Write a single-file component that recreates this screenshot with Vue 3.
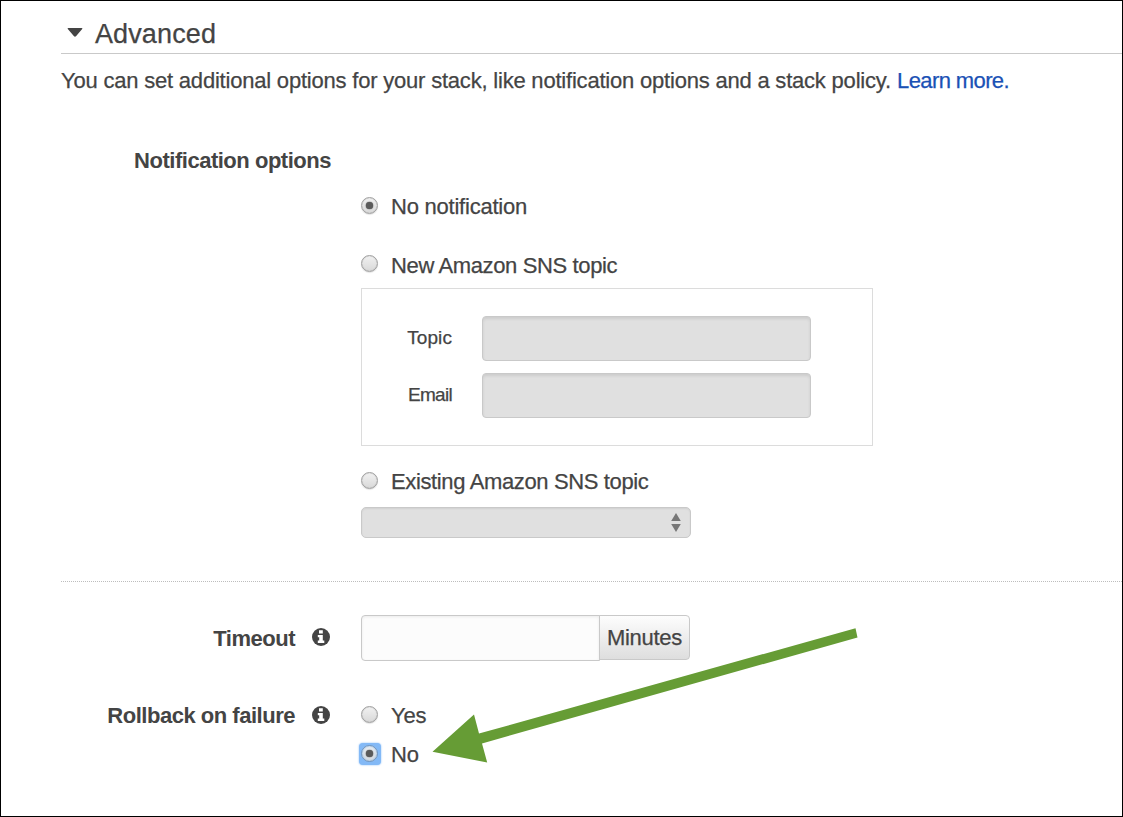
<script setup>
const channels = [
  { id: 'none', label: 'No notification', checked: true },
  { id: 'new', label: 'New Amazon SNS topic', checked: false },
  { id: 'existing', label: 'Existing Amazon SNS topic', checked: false },
]
</script>

<template>
  <main class="frame">
    <h2 class="heading">
      <svg class="caret" width="16" height="9" viewBox="0 0 16 9"><path d="M0.6 0.8Q0.4 0 1.4 0H14.6Q15.6 0 15.4 0.8L9.2 8Q8 9.4 6.8 8Z" fill="#444" /></svg>
      <span>Advanced</span>
    </h2>
    <p class="intro"><span class="sentence">You can set additional options for your stack, like notification options and a stack policy.</span> <a class="link">Learn more.</a></p>

    <section class="notifications">
      <h3 class="label title">Notification options</h3>
      <div class="options">
        <label class="option none"><span class="radio on"></span><span class="text t-none">{{ channels[0].label }}</span></label>
        <label class="option new"><span class="radio up"></span><span class="text">{{ channels[1].label }}</span></label>
        <div class="topic-box">
          <div class="field"><span class="topic">Topic</span><input disabled /></div>
          <div class="field"><span class="email">Email</span><input disabled /></div>
        </div>
        <label class="option existing"><span class="radio"></span><span class="text">{{ channels[2].label }}</span></label>
        <div class="select">
          <svg width="10" height="19" viewBox="0 0 10 19"><path d="M5 0L9.8 8H0.2ZM0.2 11H9.8L5 19Z" fill="#777" /></svg>
        </div>
      </div>
    </section>

    <section class="settings">
      <div class="row timeout">
        <span class="label">Timeout</span>
        <svg class="info" width="18" height="18" viewBox="0 0 18 18"><circle cx="9" cy="9" r="9" fill="#444" /><path d="M7 2.3h3.8v3.2H7zM5.8 7.1h5v5.5h1.5v2.3H5.8v-2.3h1.4V9.3H5.8z" fill="#fff" /></svg>
        <div class="duration"><input /><button>Minutes</button></div>
      </div>
      <div class="row rollback">
        <span class="label">Rollback on failure</span>
        <svg class="info" width="18" height="18" viewBox="0 0 18 18"><circle cx="9" cy="9" r="9" fill="#444" /><path d="M7 2.3h3.8v3.2H7zM5.8 7.1h5v5.5h1.5v2.3H5.8v-2.3h1.4V9.3H5.8z" fill="#fff" /></svg>
        <div class="choices">
          <label class="option"><span class="radio"></span><span class="text short">Yes</span></label>
          <label class="option no"><span class="halo"><span class="radio on"></span></span><span class="text short">No</span></label>
        </div>
      </div>
    </section>

    <svg class="arrow" width="426" height="136" viewBox="0 0 426 136"><path d="M0.5 121.8L42 84.5L47 103.6L423.5 -1.8L425.5 7.5L50 113.4L55.2 132.5Z" fill="#669c35" /></svg>
  </main>
</template>

<style>
body { margin: 0; background: #fff; }
</style>

<style scoped>
* { box-sizing: border-box; }
.frame {
  position: relative;
  width: 1123px;
  height: 817px;
  border: 1px solid #000;
  padding-left: 60px;
  overflow: hidden;
  background: #fff;
  color: #444;
  font: 22px/30px "Liberation Sans", Arial, sans-serif;
  white-space: nowrap;
  -webkit-text-stroke: .25px currentColor;
}
.heading {
  display: flex;
  align-items: center;
  height: 53px;
  margin: 0;
  padding: 13px 0 0 5px;
  border-bottom: 1px solid #c9c9c9;
  font-size: 27px;
  font-weight: 400;
  line-height: 39px;
}
.heading span { padding-top: 2px; letter-spacing: .12px; }
.caret { margin: -2px 12.4px 0 .6px; }
.intro { margin: 0; padding-top: 1px; line-height: 52px; }
.sentence { letter-spacing: -.205px; }
.link { color: #1a51b5; letter-spacing: -.6px; }
.label { font-weight: 700; text-align: right; letter-spacing: -.48px; -webkit-text-stroke: 0; }
.title { width: 270px; margin: 39px 0 0; font-size: 22px; }
.options { margin-left: 300px; }
.option { display: flex; align-items: center; height: 30px; }
.text { padding-top: 2px; letter-spacing: -.365px; }
.t-none { letter-spacing: -.23px; }
.short { letter-spacing: -.2px; }
.none { margin-top: 15px; }
.new { margin-top: 29px; }
.existing { margin-top: 20px; }
.radio {
  flex: none;
  display: flex;
  align-items: center;
  justify-content: center;
  width: 17px;
  height: 17px;
  margin: -2px 13px 0 0;
  border: 1px solid #a0a0a0;
  border-radius: 50%;
  background: linear-gradient(#f1f1f1, #d9d9d9);
  box-shadow: 0 1px 1px #e4e4e4, inset 0 0 1px #aaa;
}
.radio.up { margin-top: -4px; }
.radio.on::after {
  content: "";
  width: 7px;
  height: 7px;
  border-radius: 50%;
  background: #5a5a5a;
  box-shadow: 0 0 1px .3px #666;
}
.halo {
  flex: none;
  width: 22px;
  height: 22px;
  margin: 0 10px 0 -2px;
  padding: 2px 0 0 2px;
  border-radius: 4px;
  background: #83b9f6;
  box-shadow: 0 0 2px #83b9f6;
}
.halo .radio {
  margin: 0;
  border-color: #7395ba;
  background: linear-gradient(#e9eef3, #d6dbe0);
  box-shadow: inset 0 0 2px #83b0e0;
}
.topic-box {
  display: flex;
  flex-direction: column;
  gap: 12px;
  width: 512px;
  height: 158px;
  margin-top: 8px;
  padding-top: 27px;
  border: 1px solid #dcdcdc;
}
.field { display: flex; align-items: center; gap: 30px; height: 45px; font-size: 19px; }
.field span { width: 90px; padding-bottom: 2px; text-align: right; line-height: 42px; }
.topic { letter-spacing: .1px; }
.email { letter-spacing: -.7px; }
input { margin: 0; outline: 0; }
.field input {
  width: 329px;
  height: 45px;
  border: 1px solid #c9c9c9;
  border-radius: 4px;
  background: #e0e0e0;
  box-shadow: inset 0 2px 3px rgba(0, 0, 0, .09);
}
.select {
  display: flex;
  align-items: center;
  justify-content: flex-end;
  width: 330px;
  height: 31px;
  margin-top: 11px;
  padding-right: 9px;
  border: 1px solid #c9c9c9;
  border-radius: 5px;
  background: #e0e0e0;
  box-shadow: inset 0 1px 2px rgba(0, 0, 0, .07);
}
.settings { margin-top: 43px; border-top: 1px dotted #bdbdbd; }
.row { display: flex; }
.row .label { width: 234px; padding-top: 1px; }
.timeout { align-items: center; height: 46px; margin-top: 33px; }
.timeout .label { padding-top: 2px; }
.info { margin: 0 31.5px 0 16.5px; flex: none; }
.timeout .info { margin-top: -2px; }
.duration { display: flex; align-items: flex-start; height: 46px; }
.duration input {
  width: 239px;
  height: 46px;
  border: 1px solid #c9c9c9;
  border-radius: 4px 0 0 4px;
  background: #fcfcfc;
  box-shadow: inset 0 1px 3px rgba(0, 0, 0, .07);
}
.duration button {
  width: 91px;
  height: 45px;
  margin-left: -1px;
  padding: 0;
  border: 1px solid #c9c9c9;
  border-radius: 0 4px 4px 0;
  background: linear-gradient(#fdfdfd, #dedede);
  color: #444;
  font: inherit;
  letter-spacing: -.28px;
  -webkit-text-stroke: .25px currentColor;
}
.rollback { margin-top: 39px; }
.rollback .info { margin-top: 6px; }
.no { margin-top: 9px; }
.arrow { position: absolute; left: 431px; top: 629px; overflow: visible; }
</style>
